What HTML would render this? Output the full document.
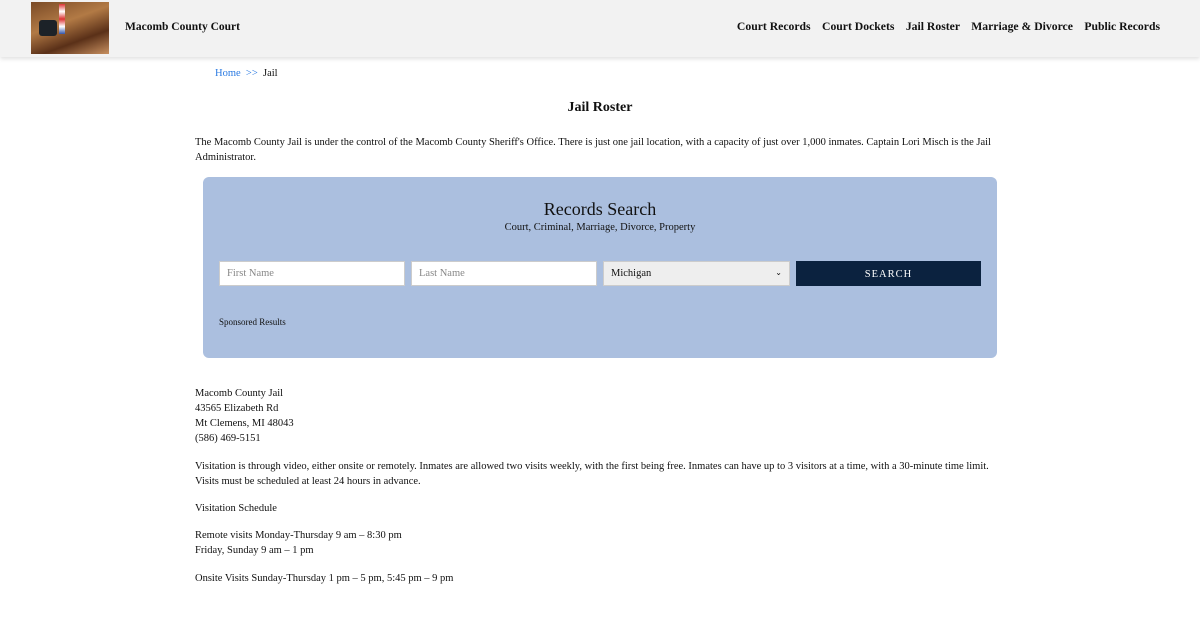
<!DOCTYPE html>
<html><head><meta charset="utf-8"><style>
body{margin:0;background:#fff;font-family:"Liberation Serif",serif;color:#111;font-size:10.5px;}
.hdr{height:57px;background:#f2f2f2;box-shadow:0 2px 4px rgba(0,0,0,.12);position:relative;}
.logo{position:absolute;left:31px;top:2px;width:78px;height:52px;background:linear-gradient(160deg,#7a4a26,#b27a45 40%,#5a3018 70%,#c89060);}
.logo:before{content:"";position:absolute;left:8px;top:18px;width:18px;height:16px;background:#1c2228;border-radius:3px;}
.logo:after{content:"";position:absolute;left:28px;top:2px;width:6px;height:30px;background:linear-gradient(#d33,#fff,#d33,#fff,#35a);}
.title{position:absolute;left:125px;top:21px;font-size:11.5px;font-weight:bold;}
.nav{position:absolute;right:40px;top:20px;font-size:11.7px;font-weight:bold;}
.nav span{margin-left:8.5px;}
.bc{position:absolute;left:215px;top:68px;}
.bc a{color:#2a7ae2;text-decoration:none}
h1{position:absolute;left:0;right:0;top:100px;margin:0;text-align:center;font-size:14px;}
.p{position:absolute;left:195px;width:810px;line-height:15px;}
.box{position:absolute;left:203px;top:177px;width:794px;height:181px;background:#abbfdf;border-radius:6px;}
.rs{position:absolute;top:22px;width:100%;text-align:center;font-size:18px;}
.rs2{position:absolute;top:45px;width:100%;text-align:center;font-size:10.5px;}
.in{position:absolute;top:84px;height:25px;box-sizing:border-box;background:#fff;border:1px solid #ccc;color:#888;padding:6px 7px;}
.btn{position:absolute;left:593px;top:84px;width:185px;height:25px;background:#0b223f;color:#fff;text-align:center;line-height:27px;letter-spacing:1px;}
</style></head><body>
<div class="hdr"><div class="logo"></div><div class="title">Macomb County Court</div>
<div class="nav"><span>Court Records</span> <span>Court Dockets</span> <span>Jail Roster</span> <span>Marriage &amp; Divorce</span> <span>Public Records</span></div></div>
<div class="bc"><a>Home</a> &nbsp;<a>&gt;&gt;</a>&nbsp; Jail</div>
<h1>Jail Roster</h1>
<div class="p" style="top:135px">The Macomb County Jail is under the control of the Macomb County Sheriff's Office. There is just one jail location, with a capacity of just over 1,000 inmates. Captain Lori Misch is the Jail Administrator.</div>
<div class="box"><div class="rs">Records Search</div><div class="rs2">Court, Criminal, Marriage, Divorce, Property</div>
<div class="in" style="left:16px;width:186px">First Name</div>
<div class="in" style="left:208px;width:186px">Last Name</div>
<div class="in" style="left:400px;width:187px;background:#eee;color:#111">Michigan<span style="float:right;font-size:8px">&#8964;</span></div>
<div class="btn">SEARCH</div>
<div style="position:absolute;left:16px;top:140px;font-size:9px">Sponsored Results</div></div>
<div class="p" style="top:386px">Macomb County Jail<br>43565 Elizabeth Rd<br>Mt Clemens, MI 48043<br>(586) 469-5151</div>
<div class="p" style="top:459px">Visitation is through video, either onsite or remotely. Inmates are allowed two visits weekly, with the first being free. Inmates can have up to 3 visitors at a time, with a 30-minute time limit. Visits must be scheduled at least 24 hours in advance.</div>
<div class="p" style="top:501px">Visitation Schedule</div>
<div class="p" style="top:528px">Remote visits Monday-Thursday 9 am – 8:30 pm<br>Friday, Sunday 9 am – 1 pm</div>
<div class="p" style="top:571px">Onsite Visits Sunday-Thursday 1 pm – 5 pm, 5:45 pm – 9 pm</div>
</body></html>
